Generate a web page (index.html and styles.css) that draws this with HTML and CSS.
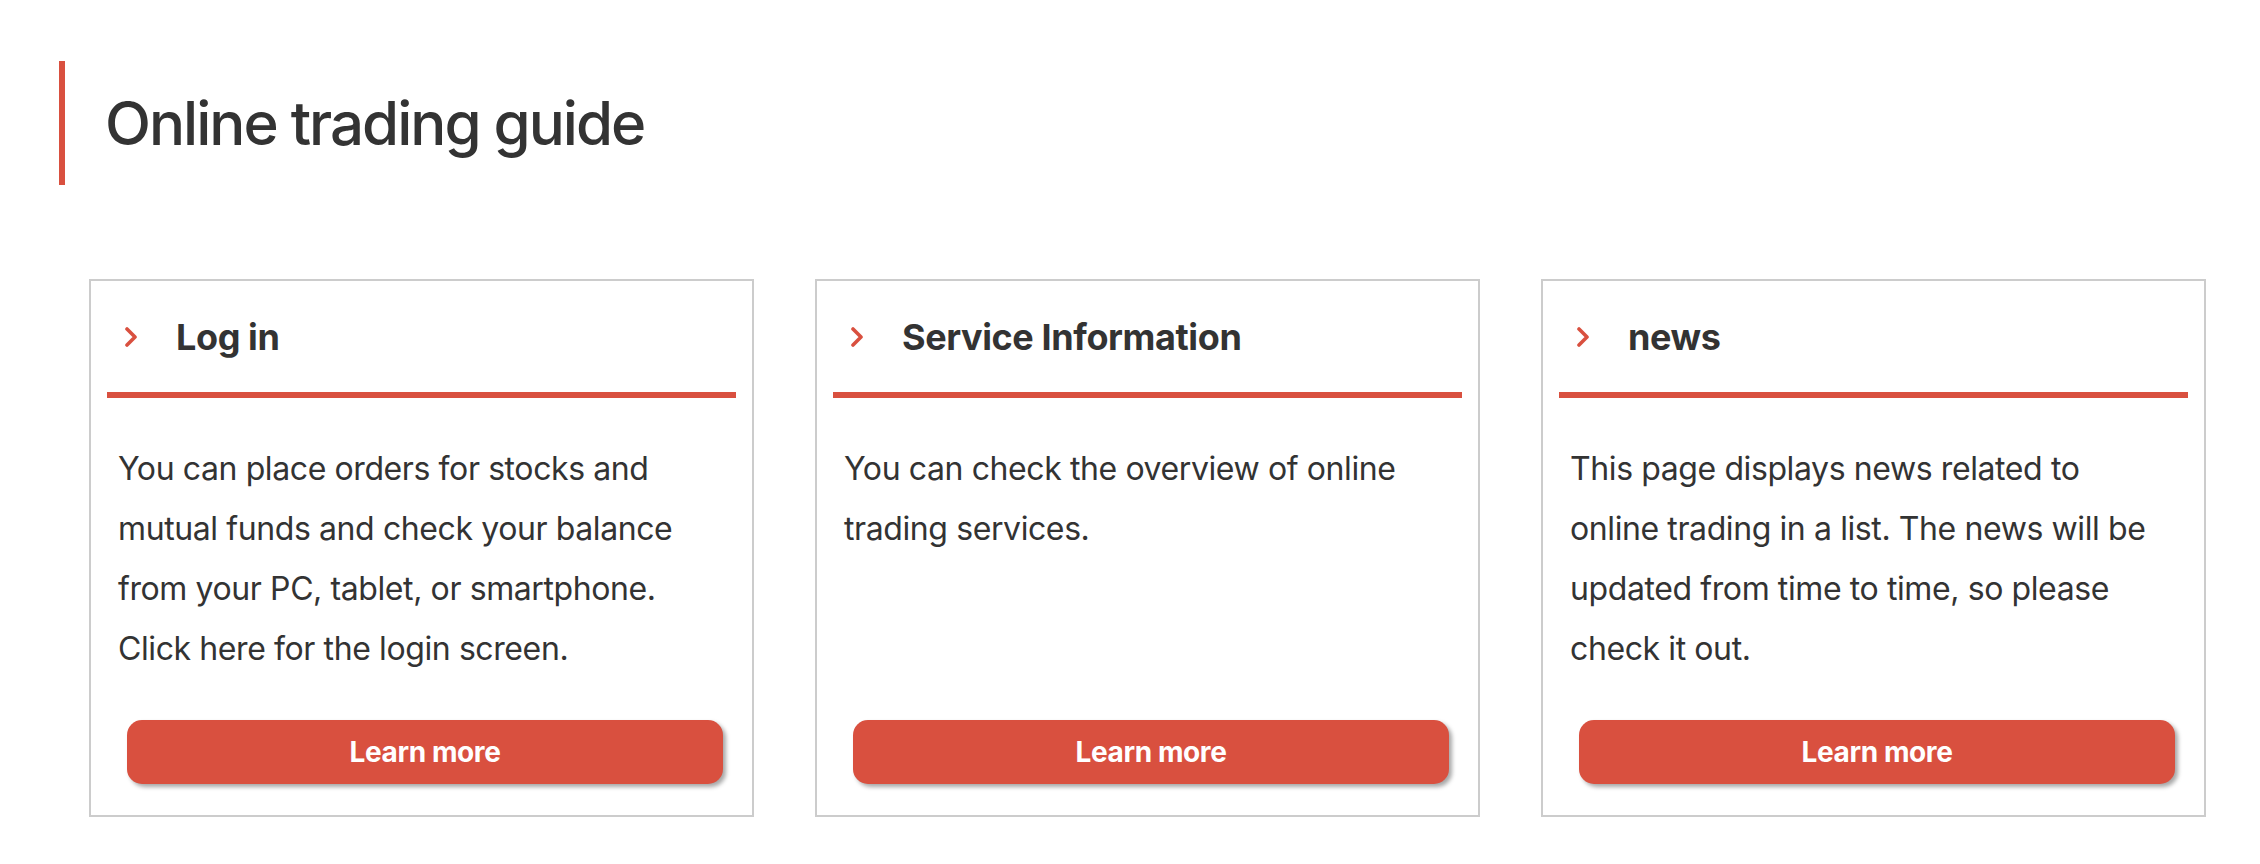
FILE: index.html
```html
<!DOCTYPE html>
<html lang="en">
<head>
<meta charset="utf-8">
<title>Online trading guide</title>
<link rel="stylesheet" href="styles.css">
</head>
<body>
<main class="page">
  <h1 class="page-title">Online trading guide</h1>
  <div class="cards">
    <section class="card">
      <h2 class="card-head">
        <svg class="chev" width="12" height="20" viewBox="0 0 12 20"><polyline points="2,2 10,10 2,18" fill="none" stroke="#d9503f" stroke-width="3.6" stroke-linecap="round" stroke-linejoin="round"/></svg>
        <span>Log in</span>
      </h2>
      <p class="card-text">You can place orders for stocks and mutual funds and check your balance from your PC, tablet, or smartphone. Click here for the login screen.</p>
      <a class="btn" href="#">Learn more</a>
    </section>
    <section class="card">
      <h2 class="card-head">
        <svg class="chev" width="12" height="20" viewBox="0 0 12 20"><polyline points="2,2 10,10 2,18" fill="none" stroke="#d9503f" stroke-width="3.6" stroke-linecap="round" stroke-linejoin="round"/></svg>
        <span>Service Information</span>
      </h2>
      <p class="card-text">You can check the overview of online trading services.</p>
      <a class="btn" href="#">Learn more</a>
    </section>
    <section class="card">
      <h2 class="card-head">
        <svg class="chev" width="12" height="20" viewBox="0 0 12 20"><polyline points="2,2 10,10 2,18" fill="none" stroke="#d9503f" stroke-width="3.6" stroke-linecap="round" stroke-linejoin="round"/></svg>
        <span>news</span>
      </h2>
      <p class="card-text">This page displays news related to online trading in a list. The news will be updated from time to time, so please check it out.</p>
      <a class="btn" href="#">Learn more</a>
    </section>
  </div>
</main>
</body>
</html>
```

FILE: styles.css
```css
* { box-sizing: border-box; }

body {
  margin: 0;
  background: #ffffff;
  color: #333333;
  font-family: Inter, "Noto Sans", sans-serif;
}

.page {
  padding: 61px 0 0 59px;
}

.page-title {
  margin: 0;
  height: 124px;
  border-left: 6px solid #d9503f;
  padding-left: 40px;
  font-size: 60px;
  font-weight: 500;
  line-height: 124px;
  letter-spacing: -2px;
  color: #333333;
}

.cards {
  display: flex;
  gap: 61px;
  margin: 94px 0 0 30px;
}

.card {
  width: 665px;
  border: 2px solid #cccccc;
  padding: 0 16px 31px;
  display: flex;
  flex-direction: column;
}

.card-head {
  margin: 0;
  padding: 29px 0 28px 18px;
  border-bottom: 6px solid #d9503f;
  display: flex;
  align-items: center;
  gap: 39px;
  font-size: 36px;
  font-weight: 700;
  line-height: 54px;
  letter-spacing: -0.4px;
  color: #333333;
}

.chev {
  flex: none;
  display: block;
}

.card-text {
  flex: 1;
  margin: 41px 0 0;
  padding: 0 15px 0 11px;
  font-size: 32px;
  line-height: 60px;
  letter-spacing: -0.4px;
}

.btn {
  display: block;
  margin: 41px 13px 0 20px;
  height: 64px;
  border-radius: 15px;
  background: #d9503f;
  box-shadow: 3px 3px 4px rgba(0, 0, 0, 0.35);
  color: #ffffff;
  font-size: 28px;
  font-weight: 700;
  line-height: 64px;
  letter-spacing: -0.4px;
  text-align: center;
  text-decoration: none;
}
```
